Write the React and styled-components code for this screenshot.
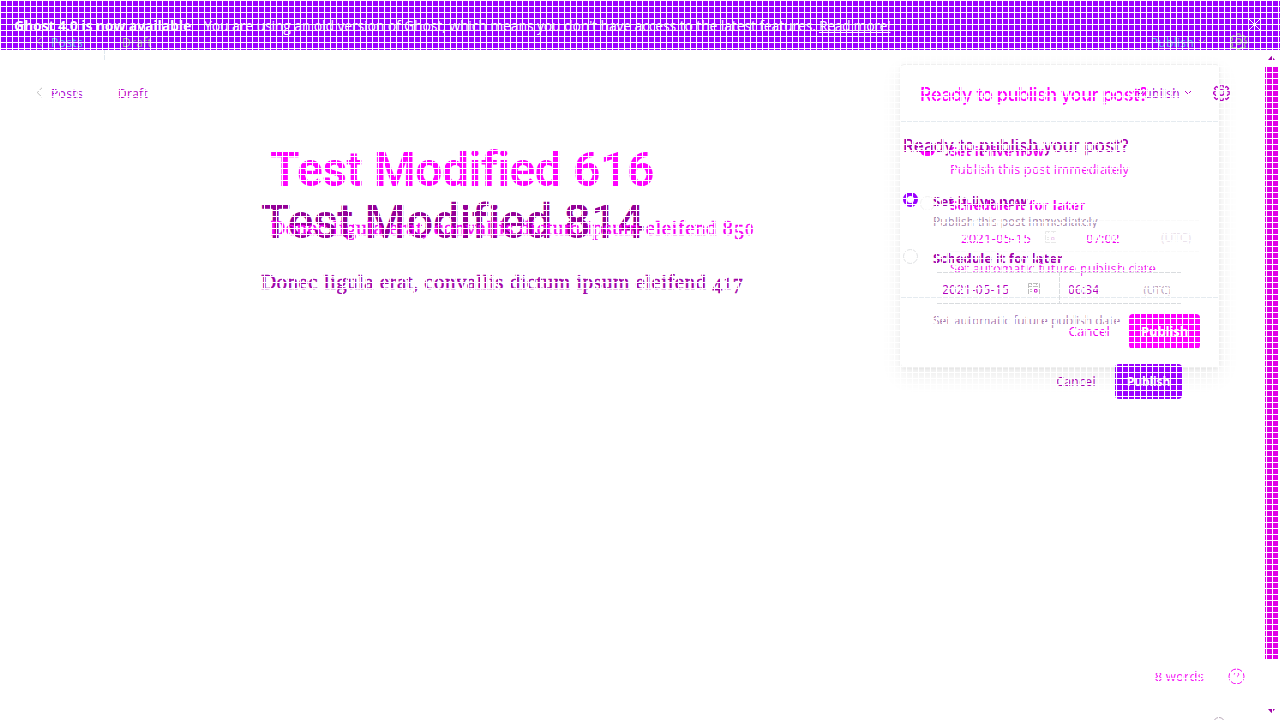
import React from "react";
import styled, { createGlobalStyle } from "styled-components";

const UI = `"Open Sans", "Noto Sans", sans-serif`;
const INTER = `Inter, "Open Sans", sans-serif`;

const Global = createGlobalStyle`
  * { box-sizing: border-box; }
  html, body { margin: 0; background: #fff; overflow: hidden; }
`;
const Screen = styled.div`
  position: relative; width: 1280px; height: 720px; overflow: hidden;
  background: #fff; font-family: ${UI};
`;
const Layer = styled.div`
  position: absolute; inset: 0; display: flex; flex-direction: column;
`;
const Mesh = styled.div`
  position: absolute; inset: 0; pointer-events: none;
  background:
    linear-gradient(90deg, #fff 1px, transparent 1px) 0 0 / 6px 6px,
    linear-gradient(#fff 1px, transparent 1px) 0 0 / 6px 6px;
`;
const Text = styled.span`
  display: block; white-space: nowrap;
  font-family: ${p => p.$font || UI};
  font-size: ${p => p.$size || 12}px;
  font-weight: ${p => p.$weight || 400};
  line-height: ${p => p.$line || 18}px;
  letter-spacing: ${p => p.$track || 0}px;
  color: ${p => p.$color || "#c400cc"};
`;
const Banner = styled.header`
  display: flex; align-items: center; flex: none; height: 50px;
  padding: 2px 19px 0 14px; background: #9b00ff; color: #fff;
  & > svg { margin-left: auto; margin-bottom: 3px; }
`;
const BannerLink = styled.a`
  margin-left: 3px; color: #fff; font-size: 14px; line-height: 18px;
  letter-spacing: -0.36px; text-decoration: underline; white-space: nowrap;
`;
const BannerGap = styled.span` width: 13px; flex: none; `;
const Header = styled.nav`
  display: flex; align-items: center; flex: none; height: 18px;
  margin-top: ${p => p.$top}px; padding-left: ${p => p.$left}px; padding-right: ${p => p.$right}px;
`;
const Crumb = styled.div`
  display: flex; align-items: center; gap: 7px; width: ${p => p.$width}px;
  & > svg { margin-bottom: 4px; }
`;
const Actions = styled.div`
  display: flex; align-items: center; margin-left: auto;
  & > svg { margin-bottom: 3px; }
`;
const Caret = styled.svg` margin-left: 4px; margin-right: ${p => p.$gap}px; `;
const Editor = styled.main`
  display: flex; flex-direction: column; align-items: flex-start;
  padding-left: ${p => p.$left}px; padding-top: ${p => p.$top}px;
`;
const Title = styled.h1`
  margin: 0; white-space: nowrap; font-family: Roboto, sans-serif; font-size: 48px; line-height: 56px;
  font-weight: ${p => p.$weight}; letter-spacing: ${p => p.$track}px; color: ${p => p.$color};
`;
const Body = styled.p`
  margin: ${p => p.$gap}px 0 0; white-space: nowrap;
  font-family: "Liberation Serif", serif; font-size: 21px; line-height: 26px;
  letter-spacing: ${p => p.$track}px; color: ${p => p.$color};
  -webkit-text-stroke: 0.4px ${p => p.$color};
`;
const Digit = styled.span`
  font-size: ${p => (p.$short ? 16 : 20)}px; letter-spacing: 1.3px;
  vertical-align: ${p => (p.$low ? -4 : 0)}px; line-height: 1;
`;
const Popover = styled.section`
  position: absolute; left: 900px; top: 64px; width: 320px; height: 304px;
  display: flex; flex-direction: column;
  border: 1px solid #f0f0f0; border-radius: 4px;
  box-shadow: 0 8px 20px rgba(0,0,0,.08), 0 1px 3px rgba(0,0,0,.05);
`;
const PopHead = styled.div`
  height: 57px; padding: 16px 19px 0; border-bottom: 1px solid #e5ebf0; flex: none;
`;
const PopBody = styled.div` flex: 1; padding: 20px 0 0 19px; `;
const PopFoot = styled.div`
  display: flex; align-items: center; justify-content: flex-end; gap: 19px; height: 70px; padding: 0 19px 3px;
  border-top: 1px solid #e5ebf0; flex: none;
`;
const FlatPanel = styled.section`
  position: absolute; left: 903px; top: 134px; width: 279px;
  display: flex; flex-direction: column;
`;
const Option = styled.div`
  display: flex; align-items: flex-start; gap: ${p => p.$gap}px;
  margin-top: ${p => p.$top || 0}px;
`;
const OptionText = styled.div` display: flex; flex-direction: column; `;
const Radio = styled.span`
  flex: none; width: 15px; height: 15px; border-radius: 50%;
  border: ${p => (p.$on ? `4.5px solid ${p.$on}` : `1px solid ${p.$ring || "#dfe1e3"}`)};
`;
const HalfRadio = styled.span`
  flex: none; width: 15px; height: 6px; margin-top: 8px; border-radius: 0 0 8px 8px; background: #ff00ff;
`;
const DateRow = styled.div`
  display: flex; height: 32px; margin-top: ${p => p.$top}px; margin-left: ${p => p.$left}px;
  border-top: 1px solid ${p => p.$line}; border-bottom: 1px solid ${p => p.$line};
`;
const DateCell = styled.div`
  display: flex; align-items: center; justify-content: space-between; width: ${p => p.$width}px;
  padding: 3px ${p => p.$right}px 0 ${p => p.$left}px;
  border-left: ${p => (p.$rule ? "1px solid #d9dcdf" : "0")};
  & > svg { margin-bottom: 2px; }
`;
const FlatFoot = styled.div`
  display: flex; justify-content: flex-end; align-items: center; gap: 19px; margin-top: 26px;
`;
const Button = styled.button`
  display: flex; align-items: center; justify-content: center;
  width: ${p => p.$width}px; height: 35px; padding: 0; border: 0; border-radius: 4px;
  background: ${p => p.$bg}; color: #fff; font-family: ${UI}; font-weight: 700;
  font-size: ${p => p.$size}px; letter-spacing: ${p => p.$track}px;
`;
const Stem = styled.i`
  position: absolute; left: 104px; top: 50px; width: 1px; height: 10px; background: #dfe7ee;
`;
const Scrollbar = styled.aside`
  position: absolute; left: 1265px; top: 52px; width: 13px; height: 668px;
  display: flex; flex-direction: column; align-items: center;
`;
const Thumb = styled.div` width: 13px; height: 592px; margin: 7px 0 50px; background: #e000e6; `;
const Status = styled.footer`
  position: absolute; right: 35px; bottom: 35px; display: flex; align-items: center; gap: 24px;
`;
const Tab = styled.i`
  position: absolute; left: 1213px; top: 717px; width: 12px; height: 12px;
  border-radius: 50%; border: 1px solid #b9a9b9;
`;

const Chevron = ({ color }) => (
  <svg width="8" height="13" viewBox="0 0 8 13" fill="none" stroke={color}><path d="M7 .8 1.2 6.5 7 12.2" /></svg>
);
const Down = ({ color, gap }) => (
  <Caret $gap={gap} width="8" height="5" viewBox="0 0 8 5" fill="none" stroke={color}><path d="M.7.7 4 4 7.3.7" /></Caret>
);
const Gear = ({ color }) => (
  <svg width="17" height="17" viewBox="0 0 17 17" fill="none" stroke={color} strokeWidth="1.3">
    <circle cx="8.5" cy="8.5" r="2.8" />
    <path d="M7.200.9h2.600l.5 2 1.600.7 1.700-1.100 1.900 1.900-1.100 1.700.7 1.600 2 .5v1.600l-2 .5-.7 1.600 1.100 1.700-1.900 1.900-1.700-1.100-1.600.7-.5 1.500H7.200l-.5-1.500-1.600-.7-1.700 1.100-1.900-1.900 1.100-1.700-.7-1.600-1.300-.5V8.200l1.300-.5.7-1.600-1.100-1.700 1.900-1.900 1.700 1.100 1.600-.7z" />
  </svg>
);
const Calendar = ({ color, dot }) => (
  <svg width="12" height="12" viewBox="0 0 12 12" fill="none" stroke={color}>
    <path d="M.5.5h11v11H.5zM.5 3.500h11M3.500 0v2M8.500 0v2M2 6.500h2M2 8.500h2" />
    <path d="M6.500 6.500h2.500v2.500h-2.500z" stroke={dot} />
  </svg>
);

const TopBar = ({ top, left, right, color, crumbWidth, icon, link, gap, weight }) => (
  <Header $top={top} $left={left} $right={right}>
    <Crumb $width={crumbWidth}><Chevron color={icon} /><Text $color={link} $weight={weight} $track={.37}>Posts</Text></Crumb>
    <Text $color={color} $weight={weight} $track={.28}>Draft</Text>
    <Actions><Text $color={link} $weight={weight} $track={.3}>Publish</Text><Down color={color} gap={gap} /><Gear color={color} /></Actions>
  </Header>
);

export default function App() {
  return (
    <>
      <Global />
      <Screen>
        <Layer>
          <Banner>
            <Text $size={14} $weight={700} $track={-.11} $color="#fff">Ghost 4.0 is now available</Text>
            <BannerGap />
            <Text $size={14} $track={-.14} $color="#fff">You are using an old version of Ghost, which means you don't have access to the latest features.</Text>
            <BannerLink>Read more!</BannerLink>
            <svg width="13" height="13" viewBox="0 0 13 13" stroke="#fff"><path d="m1 1 11 11M12 1 1 12" /></svg>
          </Banner>
          <TopBar top={35} left={36} right={50} color="#b800c4" link="#a800d0" icon="#bbb" crumbWidth={82} gap={21} />
          <Editor $left={261} $top={91}>
            <Title $weight={500} $track={-.38} $color="#940098">Test Modified 814</Title>
            <Body $gap={19} $track={.43} $color="#a000a8">Donec ligula erat, convallis dictum ipsum eleifend <Digit $low>4</Digit><Digit $short>1</Digit><Digit $low>7</Digit></Body>
          </Editor>
        </Layer>

        <Layer>
          <TopBar top={34} left={36} right={33} color="#9ab396" link="#5fc0e4" icon="#9ab396" crumbWidth={86} gap={24} />
          <Editor $left={270} $top={90}>
            <Title $weight={600} $track={-.42} $color="#ff00ff">Test Modified 616</Title>
            <Body $gap={17} $track={.46} $color="#f500f5">Donec ligula erat, convallis dictum ipsum eleifend <Digit>8</Digit><Digit $low>5</Digit><Digit $short>0</Digit></Body>
          </Editor>
        </Layer>
        <Stem />

        <Popover>
          <PopHead><Text $font={INTER} $size={18} $line={28} $weight={500} $track={-.4} $color="#ff00ff">Ready to publish your post?</Text></PopHead>
          <PopBody>
            <Option $gap={15}>
              <HalfRadio />
              <OptionText>
                <Text $size={13} $weight={700} $track={.2} $color="#f000f0">Set it live now</Text>
                <Text $size={13} $track={.03} $color="#f510f5">Publish this post immediately</Text>
              </OptionText>
            </Option>
            <Option $gap={15} $top={18}>
              <Radio $ring="#f1f1f1" />
              <OptionText>
                <Text $size={13} $weight={700} $track={.35} $color="#f500f5">Schedule it for later</Text>
                <DateRow $top={6} $left={0} $line="#fafafa">
                  <DateCell $width={114} $left={11} $right={7}>
                    <Text $size={13} $track={.22} $color="#f000f0">2021-05-15</Text><Calendar color="#e8e8e8" dot="#eeccee" />
                  </DateCell>
                  <DateCell $width={135} $left={22} $right={8}>
                    <Text $size={13} $track={.1} $color="#f000f0">07:02</Text><Text $size={12} $color="#ebe2eb">(UTC)</Text>
                  </DateCell>
                </DateRow>
                <Text $size={13} $line={32} $track={.09} $color="#f020f0">Set automatic future publish date</Text>
              </OptionText>
            </Option>
          </PopBody>
          <PopFoot>
            <Text $size={13} $weight={500} $track={.2} $color="#f000f0">Cancel</Text>
            <Button $width={71} $bg="#ff00ff" $size={13} $track={-.1}>Publish</Button>
          </PopFoot>
        </Popover>

        <FlatPanel>
          <Text $font={INTER} $size={17} $line={24} $weight={500} $track={.02} $color="#a600ac">Ready to publish your post?</Text>
          <Option $gap={15} $top={34}>
            <Radio $on="#9b00ff" />
            <OptionText>
              <Text $size={13} $weight={700} $track={.25} $color="#a000aa">Set it live now</Text>
              <Text $size={12} $line={23} $color="#a888ac">Publish this post immediately</Text>
            </OptionText>
          </Option>
          <Option $gap={15} $top={16}>
            <Radio />
            <OptionText>
              <Text $size={13} $weight={700} $track={.08} $color="#a000aa">Schedule it for later</Text>
              <DateRow $top={5} $left={4} $line="#d9dcdf">
                <DateCell $width={122} $left={5} $right={19}>
                  <Text $track={.5} $color="#b300bc">2021-05-15</Text><Calendar color="#bbb" dot="#d020d0" />
                </DateCell>
                <DateCell $width={122} $left={8} $right={10} $rule>
                  <Text $track={.1} $color="#b300bc">06:34</Text><Text $size={11} $color="#b89fbc">(UTC)</Text>
                </DateCell>
              </DateRow>
              <Text $line={34} $color="#a878ae">Set automatic future publish date</Text>
            </OptionText>
          </Option>
          <FlatFoot>
            <Text $weight={500} $track={.44} $color="#a800b0">Cancel</Text>
            <Button $width={67} $bg="#9b00ff" $size={12} $track={-.1}>Publish</Button>
          </FlatFoot>
        </FlatPanel>

        <Scrollbar>
          <svg width="13" height="8" viewBox="0 0 13 8"><path d="M3 8 6.500 4 10 8z" fill="#a000a8" /></svg>
          <Thumb />
          <svg width="13" height="5" viewBox="0 0 13 5"><path d="M3 0h7L6.500 4z" fill="#a000a8" /></svg>
        </Scrollbar>
        <Status>
          <Text $size={13} $track={.16} $color="#f510f5">8 words</Text>
          <svg width="17" height="17" viewBox="0 0 17 17" fill="none" stroke="#f510f5">
            <circle cx="8.500" cy="8.500" r="7.500" /><path d="M6.300 6.500c0-3 4.500-2.700 4.400 0 0 1.500-2.200 1.500-2.200 3.300M8.500 11.500v1" />
          </svg>
        </Status>
        <Tab />
        <Mesh />
      </Screen>
    </>
  );
}
